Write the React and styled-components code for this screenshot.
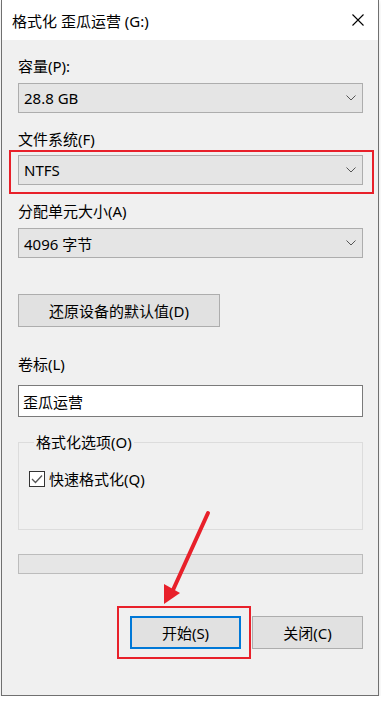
import React from "react";
import styled, { createGlobalStyle } from "styled-components";

const GlobalStyle = createGlobalStyle`
  html, body {
    margin: 0;
    padding: 0;
    background: #ffffff;
  }
  body {
    font-family: "Noto Sans", "Noto Sans CJK SC", sans-serif;
    color: #000;
  }
`;

const Window = styled.div`
  position: relative;
  box-sizing: border-box;
  width: 378px;
  height: 696px;
  margin-left: 1px;
  background: #f0f0f0;
  border: 1px solid #707070;
  border-top: none;
  box-shadow: 0 2px 4px rgba(0, 0, 0, 0.12);
  display: flex;
  flex-direction: column;
`;

const TitleBar = styled.div`
  height: 40px;
  flex: none;
  background: #fff;
  display: flex;
  align-items: center;
  justify-content: space-between;
  padding: 0 14px 0 10px;
`;

const Title = styled.div`
  font-size: 15px;
  line-height: 20px;
  margin-top: 2px;
`;

const CloseIcon = styled.svg`
  width: 12px;
  height: 12px;
  display: block;
`;

const Body = styled.div`
  padding: 16px 15px 0 16px;
  display: flex;
  flex-direction: column;
`;

const Label = styled.div`
  font-size: 15px;
  line-height: 20px;
  margin-top: ${(p) => p.$top || 0}px;
  margin-bottom: ${(p) => p.$bottom || 7}px;
`;

const Select = styled.div`
  position: relative;
  box-sizing: border-box;
  height: 30px;
  background: #e5e5e5;
  border: 1px solid #adadad;
  display: flex;
  align-items: center;
  justify-content: space-between;
  padding: 0 6px 0 5px;
  font-size: 15px;
`;

const Highlight = styled.div`
  position: relative;
  &::after {
    content: "";
    position: absolute;
    top: ${(p) => p.$t}px;
    left: ${(p) => p.$l}px;
    right: ${(p) => p.$r}px;
    bottom: ${(p) => p.$b}px;
    border: 2px solid #e8202a;
    pointer-events: none;
  }
`;

const Chevron = styled.svg`
  width: 10px;
  height: 6px;
  display: block;
`;

const Button = styled.div`
  box-sizing: border-box;
  width: ${(p) => p.$w}px;
  height: 33px;
  background: #e1e1e1;
  border: ${(p) => (p.$focus ? "2px solid #0078d7" : "1px solid #adadad")};
  display: flex;
  align-items: center;
  justify-content: center;
  font-size: 15px;
`;

const ResetButton = styled(Button)`
  margin-top: 36px;
`;

const TextInput = styled.div`
  box-sizing: border-box;
  height: 32px;
  background: #fff;
  border: 1px solid #7a7a7a;
  display: flex;
  align-items: center;
  padding: 0 4px;
  font-size: 15px;
`;

const Group = styled.fieldset`
  margin: 17px 0 0;
  padding: 19px 10px 0;
  height: 96px;
  box-sizing: border-box;
  border: 1px solid #dcdcdc;
`;

const Legend = styled.legend`
  font-size: 15px;
  line-height: 16px;
  padding: 0 2px;
  margin-left: 5px;
`;

const CheckRow = styled.label`
  display: flex;
  align-items: center;
  gap: 4px;
  font-size: 15px;
  line-height: 20px;
`;

const CheckBox = styled.span`
  box-sizing: border-box;
  width: 16px;
  height: 16px;
  border: 1px solid #333;
  background: #fff;
  display: flex;
  align-items: center;
  justify-content: center;
`;

const Progress = styled.div`
  box-sizing: border-box;
  height: 20px;
  margin-top: 24px;
  background: #e6e6e6;
  border: 1px solid #bcbcbc;
`;

const ButtonRow = styled.div`
  display: flex;
  justify-content: flex-end;
  gap: 11px;
  margin-top: 42px;
`;

const Arrow = styled.svg`
  position: absolute;
  left: 0;
  top: 0;
  width: 378px;
  height: 696px;
  pointer-events: none;
`;

const ChevronDown = () => (
  <Chevron viewBox="0 0 10 6">
    <polyline points="0.5,0.5 5,5 9.5,0.5" fill="none" stroke="#555" strokeWidth="1" />
  </Chevron>
);

export default function App() {
  return (
    <>
      <GlobalStyle />
      <Window>
        <TitleBar>
          <Title>格式化 歪瓜运营 (G:)</Title>
          <CloseIcon viewBox="0 0 12 12">
            <path d="M0.5 0.5 L11.5 11.5 M11.5 0.5 L0.5 11.5" stroke="#000" strokeWidth="1.1" />
          </CloseIcon>
        </TitleBar>
        <Body>
          <Label>容量(P):</Label>
          <Select>
            <span>28.8 GB</span>
            <ChevronDown />
          </Select>

          <Label $top={16} $bottom={6}>文件系统(F)</Label>
          <Highlight $t={-5} $l={-9} $r={-11} $b={-9}>
            <Select>
              <span>NTFS</span>
              <ChevronDown />
            </Select>
          </Highlight>

          <Label $top={16}>分配单元大小(A)</Label>
          <Select>
            <span>4096 字节</span>
            <ChevronDown />
          </Select>

          <ResetButton $w={202}>还原设备的默认值(D)</ResetButton>

          <Label $top={27} $bottom={11}>卷标(L)</Label>
          <TextInput>歪瓜运营</TextInput>

          <Group>
            <Legend>格式化选项(O)</Legend>
            <CheckRow>
              <CheckBox>
                <svg width="12" height="10" viewBox="0 0 12 10">
                  <polyline points="1,5 4.5,8.5 11,1.5" fill="none" stroke="#555" strokeWidth="1.3" />
                </svg>
              </CheckBox>
              快速格式化(Q)
            </CheckRow>
          </Group>

          <Progress />

          <ButtonRow>
            <Highlight $t={-10} $l={-13} $r={-10} $b={-10}>
              <Button $w={111} $focus>开始(S)</Button>
            </Highlight>
            <Button $w={111}>关闭(C)</Button>
          </ButtonRow>
        </Body>
        <Arrow viewBox="0 0 378 696">
          <line x1="206" y1="513" x2="171" y2="590" stroke="#e8202a" strokeWidth="4" strokeLinecap="round" />
          <polygon points="162,604 162,584 178,593" fill="#e8202a" />
        </Arrow>
      </Window>
    </>
  );
}
